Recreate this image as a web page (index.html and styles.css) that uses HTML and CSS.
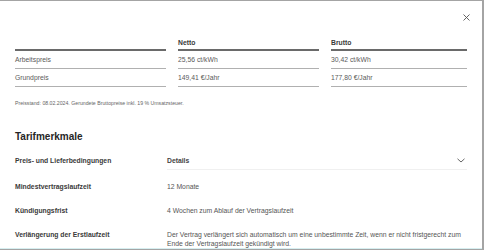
FILE: index.html
```html
<!DOCTYPE html>
<html lang="de">
<head>
<meta charset="utf-8">
<title>Tarif</title>
<link rel="stylesheet" href="styles.css">
</head>
<body>
<div class="modal">
  <button class="close" aria-label="Schließen">
    <svg width="7" height="7" viewBox="0 0 7 7"><path d="M0.5 0.5L6.5 6.5M6.5 0.5L0.5 6.5" stroke="#555" stroke-width="0.9" fill="none"/></svg>
  </button>

  <div class="prices">
    <div class="ph"></div>
    <div class="ph">Netto</div>
    <div class="ph">Brutto</div>

    <div class="pc">Arbeitspreis</div>
    <div class="pc">25,56 ct/kWh</div>
    <div class="pc">30,42 ct/kWh</div>

    <div class="pc">Grundpreis</div>
    <div class="pc">149,41 €/Jahr</div>
    <div class="pc">177,80 €/Jahr</div>
  </div>

  <p class="note">Preisstand: 08.02.2024. Gerundete Bruttopreise inkl. 19 % Umsatzsteuer.</p>

  <h2 class="heading">Tarifmerkmale</h2>

  <div class="features">
    <div class="flabel">Preis- und Lieferbedingungen</div>
    <div class="fvalue details">
      <span>Details</span>
      <svg width="8" height="5" viewBox="0 0 8 5"><path d="M0.5 0.8L4 4L7.5 0.8" stroke="#555" stroke-width="0.9" fill="none"/></svg>
    </div>

    <div class="flabel">Mindestvertragslaufzeit</div>
    <div class="fvalue">12 Monate</div>

    <div class="flabel">Kündigungsfrist</div>
    <div class="fvalue">4 Wochen zum Ablauf der Vertragslaufzeit</div>

    <div class="flabel">Verlängerung der Erstlaufzeit</div>
    <div class="fvalue">Der Vertrag verlängert sich automatisch um eine unbestimmte Zeit, wenn er nicht fristgerecht zum Ende der Vertragslaufzeit gekündigt wird.</div>
  </div>
</div>
</body>
</html>
```

FILE: styles.css
```css
html, body {
  margin: 0;
  padding: 0;
}

body {
  background: #a4a4a4;
  font-family: "Liberation Sans", Arial, sans-serif;
  color: #555;
  height: 250px;
  overflow: hidden;
}

.modal {
  position: relative;
  margin: 1px 2px 0 0;
  height: 248px;
  box-sizing: border-box;
  background: #fff;
  border-bottom: 1px solid #d6eef0;
  padding: 0 15px;
  overflow: hidden;
}

.close {
  position: absolute;
  top: 12px;
  right: 11px;
  box-sizing: border-box;
  width: 9px;
  height: 9px;
  padding: 0;
  border: 0;
  background: none;
  display: flex;
  align-items: center;
  justify-content: center;
}

.prices {
  display: grid;
  grid-template-columns: 151px 141px 1fr;
  column-gap: 12px;
  padding-top: 37px;
  font-size: 6.8px;
}

.ph {
  line-height: 10px;
  padding-bottom: 1px;
  border-bottom: 2px solid #6a6a6a;
  font-weight: 700;
  color: #3a3a3a;
}

.pc {
  line-height: 10px;
  padding: 4px 0 3px;
  border-bottom: 1px solid #b0b0b0;
  color: #5a5a5a;
}

.note {
  margin: 12px 0 0;
  font-size: 5.2px;
  line-height: 8px;
  color: #666;
}

.heading {
  margin: 24px 0 0;
  font-size: 10px;
  line-height: 12px;
  font-weight: 700;
  color: #262626;
}

.features {
  display: grid;
  grid-template-columns: 152px 1fr;
  row-gap: 15px;
  margin-top: 13px;
  font-size: 6.8px;
  line-height: 9px;
}

.flabel {
  font-weight: 700;
  color: #3a3a3a;
}

.fvalue {
  color: #555;
}

.details {
  display: flex;
  justify-content: space-between;
  align-items: center;
  padding-bottom: 4px;
  margin-bottom: -3px;
  border-bottom: 1px solid #f0f0f0;
  font-weight: 700;
  color: #444;
}

.details svg {
  margin-right: 2px;
}
```
